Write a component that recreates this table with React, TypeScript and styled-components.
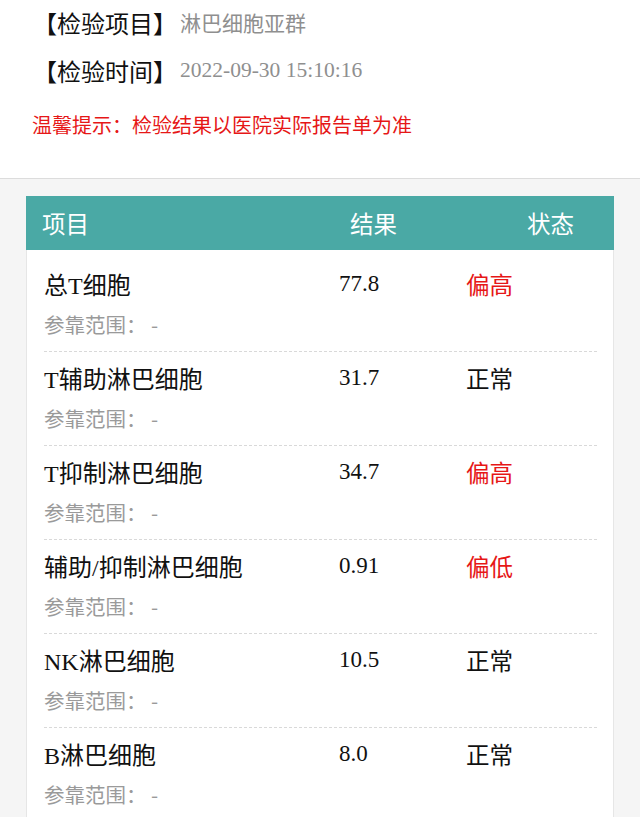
import { createGlobalStyle, styled } from "styled-components";

const GlobalStyle = createGlobalStyle`
  html, body {
    margin: 0;
    padding: 0;
    background: #f5f5f5;
  }
  body {
    font-family: "Noto Sans CJK SC", "Noto Sans", sans-serif;
  }
`;

type Status = "high" | "low" | "normal";

const items: { name: string; value: string; status: Status }[] = [
  { name: "总T细胞", value: "77.8", status: "high" },
  { name: "T辅助淋巴细胞", value: "31.7", status: "normal" },
  { name: "T抑制淋巴细胞", value: "34.7", status: "high" },
  { name: "辅助/抑制淋巴细胞", value: "0.91", status: "low" },
  { name: "NK淋巴细胞", value: "10.5", status: "normal" },
  { name: "B淋巴细胞", value: "8.0", status: "normal" },
];

const statusText: Record<Status, string> = {
  high: "偏高",
  low: "偏低",
  normal: "正常",
};

const App = () => {
  return (
    <Page>
      <GlobalStyle />
      <InfoSection>
        <InfoLine>
          <Label>【检验项目】</Label>
          <Value>淋巴细胞亚群</Value>
        </InfoLine>
        <InfoLine>
          <Label>【检验时间】</Label>
          <Value $serif>2022-09-30 15:10:16</Value>
        </InfoLine>
        <Hint>温馨提示：检验结果以医院实际报告单为准</Hint>
      </InfoSection>

      <Card>
        <CardHeader>
          <span>项目</span>
          <span>结果</span>
          <span>状态</span>
        </CardHeader>
        <CardBody>
          {items.map((item) => (
            <Row key={item.name}>
              <MainLine>
                <Name>{item.name}</Name>
                <Result>{item.value}</Result>
                <StatusCell $status={item.status}>
                  {statusText[item.status]}
                </StatusCell>
              </MainLine>
              <RefLine>参靠范围： -</RefLine>
            </Row>
          ))}
        </CardBody>
      </Card>
    </Page>
  );
};

export default App;

const Page = styled.div`
  min-height: 100vh;
  background: #f5f5f5;
  padding-bottom: 20px;
`;

const InfoSection = styled.div`
  background: #fff;
  padding: 0 0 39px 33px;
  border-bottom: 1px solid #dcdcdc;
`;

const InfoLine = styled.div`
  display: flex;
  align-items: center;
  height: 44px;
  & + & {
    margin-top: 4px;
  }
`;

const Label = styled.span`
  font-size: 24px;
  color: #111;
`;

const Value = styled.span<{ $serif?: boolean }>`
  font-size: ${(p) => (p.$serif ? "21.5px" : "21px")};
  color: #8f8f8f;
  font-family: ${(p) =>
    p.$serif
      ? `"Liberation Serif", "Noto Sans CJK SC", serif`
      : `"Noto Sans CJK SC", sans-serif`};
  margin-left: 3px;
`;

const Hint = styled.div`
  margin-top: 19px;
  margin-left: -1px;
  line-height: 28px;
  font-size: 20px;
  color: #e61717;
`;

const Card = styled.div`
  margin: 17px 26px 0;
  background: #fff;
  border: 1px solid #e6e6e6;
  border-top: none;
`;

const CardHeader = styled.div`
  display: grid;
  grid-template-columns: 308px 177px 1fr;
  align-items: center;
  height: 54px;
  margin: 0 -1px;
  padding-left: 16px;
  background: #4aa9a5;
  color: #fff;
  font-size: 23.5px;
`;

const CardBody = styled.div`
  padding: 8px 16px 0 17px;
`;

const Row = styled.div`
  padding: 8px 0 12px;
  border-bottom: 1px dashed #d9d9d9;
`;

const MainLine = styled.div`
  display: grid;
  grid-template-columns: 295px 127px 1fr;
  align-items: center;
  height: 34px;
  font-family: "Liberation Serif", "Noto Sans CJK SC", serif;
  color: #111;
`;

const Name = styled.span`
  font-size: 24px;
`;

const Result = styled.span`
  font-size: 23px;
`;

const StatusCell = styled.span<{ $status: Status }>`
  font-family: "Noto Sans CJK SC", sans-serif;
  font-size: 23.5px;
  color: ${(p) => (p.$status === "normal" ? "#111" : "#e61717")};
`;

const RefLine = styled.div`
  margin-top: 9px;
  height: 30px;
  line-height: 30px;
  font-size: 20.5px;
  color: #9a9a9a;
  white-space: pre;
`;
